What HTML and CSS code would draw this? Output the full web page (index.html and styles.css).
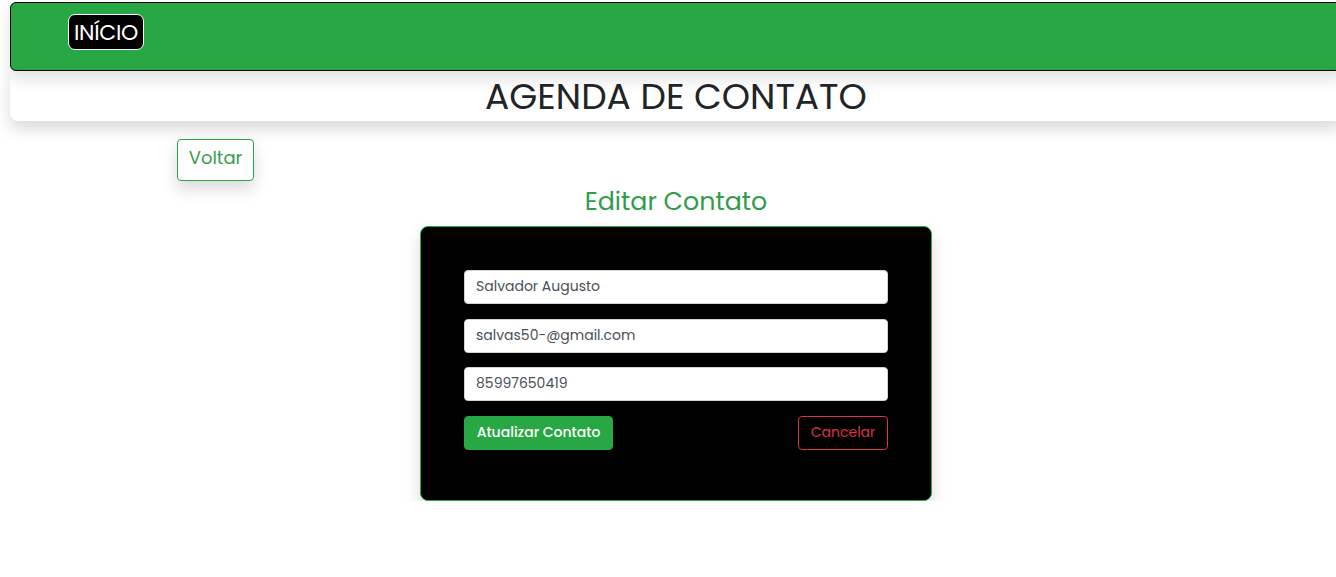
FILE: index.html
```html
<!DOCTYPE html>
<html lang="pt-BR">
<head>
<meta charset="utf-8">
<title>Agenda de Contato</title>
<link rel="stylesheet" href="styles.css">
</head>
<body>
<div class="page">
  <nav class="topbar">
    <a class="home-btn" href="#">INÍCIO</a>
  </nav>
  <header class="title-bar">
    <h1 class="title">AGENDA DE CONTATO</h1>
  </header>
  <main class="content">
    <div class="back-row">
      <a class="btn-back" href="#">Voltar</a>
    </div>
    <h2 class="form-title">Editar Contato</h2>
    <form class="card">
      <input class="field" type="text" value="Salvador Augusto">
      <input class="field" type="email" value="salvas50-@gmail.com">
      <input class="field" type="text" value="85997650419">
      <div class="actions">
        <button class="btn-save" type="button">Atualizar Contato</button>
        <button class="btn-cancel" type="button">Cancelar</button>
      </div>
    </form>
  </main>
</div>
</body>
</html>
```
FILE: styles.css
```css
html, body {
  margin: 0;
  padding: 0;
  background: #fff;
  overflow-x: hidden;
}
body {
  font-family: "Poppins", "Open Sans", sans-serif;
  color: #212529;
}
.page {
  width: 1332px;
  margin-left: 10px;
  padding-top: 2px;
}
.topbar {
  position: relative;
  z-index: 2;
  box-sizing: border-box;
  height: 69px;
  background: #28a745;
  border: 1px solid #000;
  border-radius: 6px;
  padding: 11px 0 0 57px;
  display: flex;
  align-items: flex-start;
  box-shadow: 0 8px 16px rgba(0, 0, 0, 0.12);
}
.home-btn {
  box-sizing: border-box;
  height: 36px;
  width: 76px;
  display: flex;
  align-items: center;
  justify-content: center;
  background: #000;
  color: #fff;
  border: 1px solid #fff;
  border-radius: 7px;
  font-size: 22px;
  letter-spacing: -0.3px;
  text-decoration: none;
}
.title-bar {
  position: relative;
  z-index: 1;
  box-sizing: border-box;
  height: 50px;
  padding-top: 2px;
  background: #fff;
  border-radius: 0 0 8px 8px;
  box-shadow: 0 8px 16px rgba(0, 0, 0, 0.15);
  display: flex;
  align-items: center;
  justify-content: center;
}
.title {
  margin: 0;
  font-size: 36px;
  font-weight: 400;
  line-height: 1.2;
  color: #212529;
}
.content {
  display: flex;
  flex-direction: column;
  align-items: center;
}
.back-row {
  align-self: stretch;
  padding: 18px 0 0 167px;
}
.btn-back {
  box-sizing: border-box;
  display: inline-flex;
  align-items: center;
  justify-content: center;
  width: 77px;
  height: 42px;
  padding-bottom: 6px;
  border: 1px solid #28a745;
  border-radius: 4px;
  color: #3a9c50;
  font-size: 18px;
  text-decoration: none;
  background: #fff;
  box-shadow: 0 8px 16px rgba(0, 0, 0, 0.15);
}
.form-title {
  margin: 6px 0 10px;
  font-size: 25.3px;
  font-weight: 400;
  line-height: 29px;
  color: #2f9d4b;
}
.card {
  box-sizing: border-box;
  width: 512px;
  margin: 0;
  padding: 43px 43px 50px;
  background: #000;
  border: 1px solid #28a745;
  border-radius: 8px;
  box-shadow: 0 8px 16px rgba(0, 0, 0, 0.15);
  display: flex;
  flex-direction: column;
  gap: 14.5px;
}
.field {
  box-sizing: border-box;
  width: 100%;
  height: 34px;
  margin: 0;
  padding: 0 11px 1px;
  border: 1px solid #ced4da;
  border-radius: 4px;
  background: #fff;
  color: #495057;
  font-family: inherit;
  font-size: 14px;
}
.actions {
  display: flex;
  justify-content: space-between;
  align-items: center;
}
.btn-save,
.btn-cancel {
  box-sizing: border-box;
  height: 34px;
  border-radius: 4px;
  font-family: inherit;
  font-size: 14px;
  cursor: pointer;
  padding: 0;
}
.btn-save {
  width: 149px;
  background: #28a745;
  border: 1px solid #28a745;
  color: #fff;
  font-weight: 500;
}
.btn-cancel {
  width: 90px;
  background: transparent;
  border: 1px solid #dc3545;
  color: #dc3545;
}
```
